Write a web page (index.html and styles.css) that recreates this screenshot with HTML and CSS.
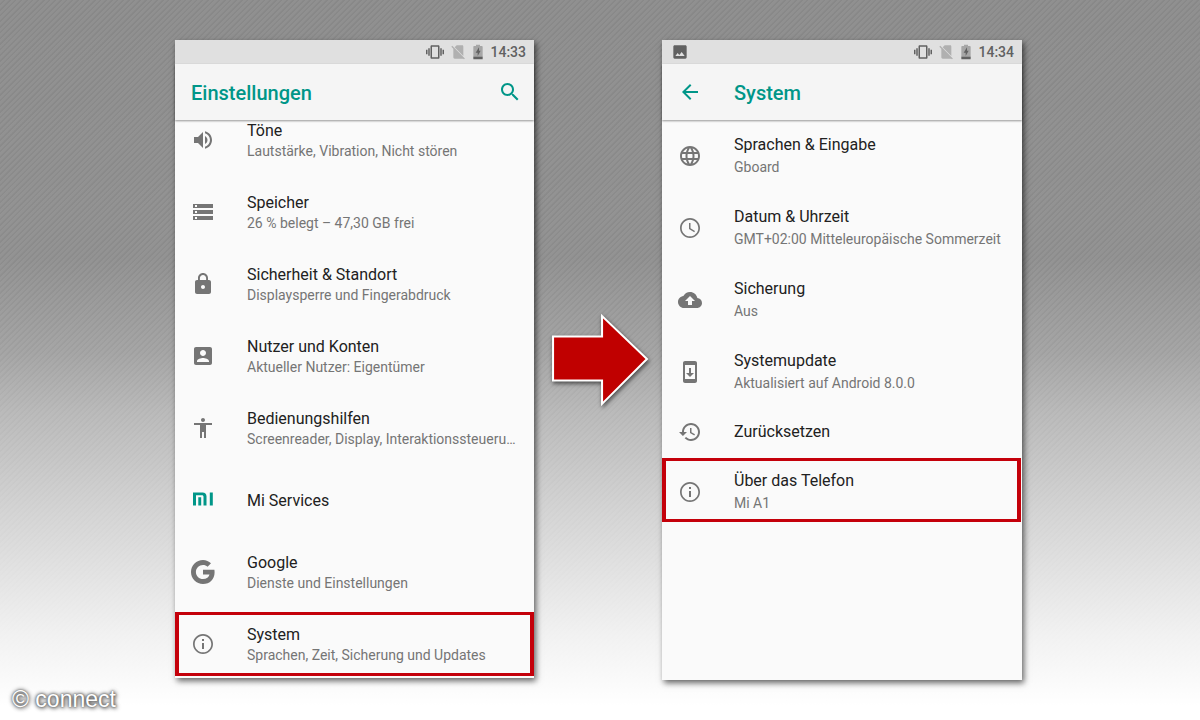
FILE: index.html
```html
<!DOCTYPE html>
<html lang="de">
<head>
  <meta charset="UTF-8">
  <meta name="viewport" content="width=device-width, initial-scale=1">
  <title>Einstellungen - System</title>
  <link rel="stylesheet" href="styles.css">
</head>
<body>
  <main class="stage">
    <section class="phone">
      <div class="statusbar">
        <div class="status-right">
          <svg class="status-icon vibrate" viewBox="0 0 24 24"><path d="M0 15h2V9H0v6zm3 2h2V7H3v10zm19-8v6h2V9h-2zm-3 8h2V7h-2v10zM16.500 3h-9C6.700 3 6 3.700 6 4.500v15c0 .8.700 1.500 1.500 1.500h9c.8 0 1.500-.7 1.500-1.500v-15c0-.8-.7-1.500-1.500-1.500zM16 19H8V5h8v14z"/></svg>
          <svg class="status-icon nosim" viewBox="0 0 24 24"><path d="M20 4c0-1.100-.5-2-1.500-2H10L7 5l13 13V4zM3.400 2.600 2 4l3 3v13c0 1.100.9 2 2 2h13l1 1 1.300-1.300z"/></svg>
          <svg class="status-icon battery" viewBox="0 0 24 24"><path class="faint" d="M17.500 3H15V1H9v2H6.500C5.700 3 5 3.700 5 4.500V20h14V4.500C19 3.700 18.300 3 17.500 3z"/><path d="M13.500 5l-5 8h3v5l4.500-8h-2.500zM5 19h14v4H5z"/></svg>
          <span>14:33</span>
        </div>
      </div>
      <header class="appbar">
        <h1>Einstellungen</h1>
        <button class="icon-btn" type="button" aria-label="Suchen">
          <svg class="icon" viewBox="0 0 24 24"><path d="M15.500 14h-.79l-.28-.27C15.410 12.590 16 11.110 16 9.500 16 5.910 13.090 3 9.500 3S3 5.910 3 9.500 5.910 16 9.500 16c1.610 0 3.090-.59 4.230-1.570l.27.28v.79l5 4.990L20.490 19l-4.990-5zm-6 0C7.010 14 5 11.990 5 9.500S7.010 5 9.500 5 14 7.010 14 9.500 11.990 14 9.500 14z"/></svg>
        </button>
      </header>
      <div class="scroll">
        <ul class="list scrolled">
          <li><a class="row" href="#">
            <svg class="icon" viewBox="0 0 24 24"><path d="M3 9v6h4l5 5V4L7 9H3zm13.500 3c0-1.770-1.020-3.290-2.500-4.030v8.050c1.480-.73 2.500-2.250 2.500-4.020zM14 3.230v2.060c2.890.86 5 3.540 5 6.710s-2.110 5.850-5 6.710v2.060c4.010-.91 7-4.490 7-8.770s-2.990-7.860-7-8.770z"/></svg>
            <div class="text"><span class="title">Töne</span><span class="sub">Lautstärke, Vibration, Nicht stören</span></div>
          </a></li>
          <li><a class="row" href="#">
            <svg class="icon" viewBox="0 0 24 24"><path d="M2 20h20v-4H2v4zm2-3h2v2H4v-2zM2 4v4h20V4H2zm4 3H4V5h2v2zm-4 7h20v-4H2v4zm2-3h2v2H4v-2z"/></svg>
            <div class="text"><span class="title">Speicher</span><span class="sub">26 % belegt – 47,30 GB frei</span></div>
          </a></li>
          <li><a class="row" href="#">
            <svg class="icon" viewBox="0 0 24 24"><path d="M18 8h-1V6c0-2.760-2.240-5-5-5S7 3.240 7 6v2H6c-1.100 0-2 .9-2 2v10c0 1.100.9 2 2 2h12c1.100 0 2-.9 2-2V10c0-1.100-.9-2-2-2zm-6 9c-1.100 0-2-.9-2-2s.9-2 2-2 2 .9 2 2-.9 2-2 2zm3.100-9H8.900V6c0-1.710 1.390-3.100 3.100-3.100s3.100 1.390 3.100 3.100v2z"/></svg>
            <div class="text"><span class="title">Sicherheit &amp; Standort</span><span class="sub">Displaysperre und Fingerabdruck</span></div>
          </a></li>
          <li><a class="row" href="#">
            <svg class="icon" viewBox="0 0 24 24"><path d="M3 5v14c0 1.100.89 2 2 2h14c1.100 0 2-.9 2-2V5c0-1.100-.9-2-2-2H5c-1.110 0-2 .9-2 2zm12 4c0 1.660-1.340 3-3 3s-3-1.340-3-3 1.340-3 3-3 3 1.340 3 3zm-9 8c0-2 4-3.100 6-3.100s6 1.100 6 3.100v1H6v-1z"/></svg>
            <div class="text"><span class="title">Nutzer und Konten</span><span class="sub">Aktueller Nutzer: Eigentümer</span></div>
          </a></li>
          <li><a class="row" href="#">
            <svg class="icon" viewBox="0 0 24 24"><path d="M12 2c1.100 0 2 .9 2 2s-.9 2-2 2-2-.9-2-2 .9-2 2-2zm9 7h-6v13h-2v-6h-2v6H9V9H3V7h18v2z"/></svg>
            <div class="text"><span class="title">Bedienungshilfen</span><span class="sub">Screenreader, Display, Interaktionssteueru…</span></div>
          </a></li>
          <li><a class="row" href="#">
            <svg class="icon teal" viewBox="0 0 24 24"><path d="M2 4.500h9.500c2.500 0 4 1.300 4 3.800v9.200h-3V8.800c0-1-.5-1.600-1.500-1.600H5v10.300H2zM7.300 9.300h2.900v8.200H7.300zM18.800 4.500h3v13h-3z"/></svg>
            <div class="text"><span class="title">Mi Services</span></div>
          </a></li>
          <li><a class="row" href="#">
            <svg class="icon" viewBox="0 0 24 24"><path d="M12 9.800v4.600h6.500c-.5 2.700-2.900 4.700-6.500 4.700-3.900 0-7.100-3.200-7.100-7.100S8.100 4.900 12 4.900c1.800 0 3.300.6 4.600 1.800l3.400-3.400C17.900 1.300 15.200 0 12 0 5.400 0 0 5.400 0 12s5.400 12 12 12c6.900 0 11.600-4.900 11.600-11.800 0-.8-.1-1.600-.2-2.400H12z"/></svg>
            <div class="text"><span class="title">Google</span><span class="sub">Dienste und Einstellungen</span></div>
          </a></li>
          <li><a class="row marked" href="#">
            <svg class="icon" viewBox="0 0 24 24"><path d="M11 17h2v-6h-2v6zm1-15C6.480 2 2 6.480 2 12s4.480 10 10 10 10-4.480 10-10S17.520 2 12 2zm0 18.300c-4.580 0-8.300-3.720-8.300-8.300S7.420 3.700 12 3.700s8.300 3.720 8.300 8.300-3.720 8.300-8.300 8.300zM11 9h2V7h-2v2z"/></svg>
            <div class="text"><span class="title">System</span><span class="sub">Sprachen, Zeit, Sicherung und Updates</span></div>
          </a></li>
        </ul>
      </div>
    </section>

    <svg class="arrow" viewBox="0 0 96 94"><path d="M2 24H50V4L94 46 50 90V67H2z"/></svg>

    <section class="phone detail">
      <div class="statusbar">
        <svg class="status-icon" viewBox="0 0 24 24"><path d="M22 20V4c0-1.100-.9-2-2-2H4c-1.100 0-2 .9-2 2v16c0 1.100.9 2 2 2h16c1.100 0 2-.9 2-2zM8.500 13.500l2.500 3.010L14.500 12l4.500 6H5l3.500-4.500z"/></svg>
        <div class="status-right">
          <svg class="status-icon vibrate" viewBox="0 0 24 24"><path d="M0 15h2V9H0v6zm3 2h2V7H3v10zm19-8v6h2V9h-2zm-3 8h2V7h-2v10zM16.500 3h-9C6.700 3 6 3.700 6 4.500v15c0 .8.700 1.500 1.500 1.500h9c.8 0 1.500-.7 1.500-1.500v-15c0-.8-.7-1.500-1.500-1.500zM16 19H8V5h8v14z"/></svg>
          <svg class="status-icon nosim" viewBox="0 0 24 24"><path d="M20 4c0-1.100-.5-2-1.500-2H10L7 5l13 13V4zM3.400 2.600 2 4l3 3v13c0 1.100.9 2 2 2h13l1 1 1.300-1.300z"/></svg>
          <svg class="status-icon battery" viewBox="0 0 24 24"><path class="faint" d="M17.500 3H15V1H9v2H6.500C5.700 3 5 3.700 5 4.500V20h14V4.500C19 3.700 18.300 3 17.500 3z"/><path d="M13.500 5l-5 8h3v5l4.500-8h-2.500zM5 19h14v4H5z"/></svg>
          <span>14:34</span>
        </div>
      </div>
      <header class="appbar">
        <button class="icon-btn" type="button" aria-label="Zurück">
          <svg class="icon" viewBox="0 0 24 24"><path d="M20 11H7.830l5.590-5.590L12 4l-8 8 8 8 1.410-1.410L7.830 13H20v-2z"/></svg>
        </button>
        <h1>System</h1>
      </header>
      <div class="scroll">
        <ul class="list">
          <li><a class="row" href="#">
            <svg class="icon" viewBox="0 0 24 24"><path d="M11.990 2C6.470 2 2 6.480 2 12s4.470 10 9.990 10C17.520 22 22 17.520 22 12S17.520 2 11.990 2zm6.930 6h-2.950c-.32-1.250-.78-2.450-1.380-3.560 1.840.63 3.370 1.910 4.330 3.560zM12 4.040c.83 1.200 1.480 2.530 1.910 3.960h-3.820c.43-1.430 1.080-2.760 1.910-3.960zM4.260 14C4.100 13.360 4 12.690 4 12s.1-1.360.26-2h3.380c-.08.66-.14 1.320-.14 2s.06 1.340.14 2H4.260zm.82 2h2.950c.32 1.250.78 2.450 1.380 3.560-1.840-.63-3.370-1.900-4.330-3.560zm2.950-8H5.080c.96-1.660 2.490-2.930 4.330-3.560C8.810 5.550 8.350 6.750 8.030 8zM12 19.960c-.83-1.200-1.480-2.530-1.910-3.960h3.820c-.43 1.430-1.080 2.760-1.910 3.960zM14.340 14H9.660c-.09-.66-.16-1.320-.16-2s.07-1.350.16-2h4.680c.09.65.16 1.320.16 2s-.07 1.340-.16 2zm.25 5.560c.6-1.110 1.060-2.310 1.380-3.560h2.950c-.96 1.650-2.490 2.930-4.330 3.560zM16.360 14c.08-.66.14-1.320.14-2s-.06-1.340-.14-2h3.380c.16.64.26 1.310.26 2s-.1 1.360-.26 2h-3.380z"/></svg>
            <div class="text"><span class="title">Sprachen &amp; Eingabe</span><span class="sub">Gboard</span></div>
          </a></li>
          <li><a class="row" href="#">
            <svg class="icon" viewBox="0 0 24 24"><path d="M12 2C6.480 2 2 6.480 2 12s4.480 10 10 10 10-4.480 10-10S17.520 2 12 2zm0 18.300c-4.580 0-8.300-3.720-8.300-8.300S7.420 3.700 12 3.700s8.300 3.720 8.300 8.300-3.720 8.300-8.300 8.300zM12.500 7H11v6l5.250 3.150.75-1.230-4.500-2.670z"/></svg>
            <div class="text"><span class="title">Datum &amp; Uhrzeit</span><span class="sub">GMT+02:00 Mitteleuropäische Sommerzeit</span></div>
          </a></li>
          <li><a class="row" href="#">
            <svg class="icon" viewBox="0 0 24 24"><path d="M19.350 10.040C18.670 6.590 15.640 4 12 4 9.110 4 6.600 5.640 5.350 8.040 2.340 8.360 0 10.910 0 14c0 3.310 2.690 6 6 6h13c2.760 0 5-2.240 5-5 0-2.640-2.050-4.780-4.650-4.960zM14 13v4h-4v-4H7l5-5 5 5h-3z"/></svg>
            <div class="text"><span class="title">Sicherung</span><span class="sub">Aus</span></div>
          </a></li>
          <li><a class="row" href="#">
            <svg class="icon" viewBox="0 0 24 24"><path d="M17 1H7c-1.100 0-2 .9-2 2v18c0 1.100.9 2 2 2h10c1.100 0 2-.9 2-2V3c0-1.100-.9-2-2-2zm0 18H7V5h10v14zm-1-6h-3V8h-2v5H8l4 4 4-4z"/></svg>
            <div class="text"><span class="title">Systemupdate</span><span class="sub">Aktualisiert auf Android 8.0.0</span></div>
          </a></li>
          <li><a class="row single" href="#">
            <svg class="icon" viewBox="0 0 24 24"><path d="M13 3c-4.970 0-9 4.030-9 9H1l3.890 3.890.07.14L9 12H6c0-3.870 3.130-7 7-7s7 3.130 7 7-3.130 7-7 7c-1.930 0-3.680-.79-4.940-2.060l-1.420 1.420C8.270 19.990 10.510 21 13 21c4.970 0 9-4.030 9-9s-4.030-9-9-9zm-1 5v5l4.280 2.540.72-1.210-3.500-2.080V8H12z"/></svg>
            <div class="text"><span class="title">Zurücksetzen</span></div>
          </a></li>
          <li><a class="row marked" href="#">
            <svg class="icon" viewBox="0 0 24 24"><path d="M11 17h2v-6h-2v6zm1-15C6.480 2 2 6.480 2 12s4.480 10 10 10 10-4.480 10-10S17.520 2 12 2zm0 18.300c-4.580 0-8.300-3.720-8.300-8.300S7.420 3.700 12 3.700s8.300 3.720 8.300 8.300-3.720 8.300-8.300 8.300zM11 9h2V7h-2v2z"/></svg>
            <div class="text"><span class="title">Über das Telefon</span><span class="sub">Mi A1</span></div>
          </a></li>
        </ul>
      </div>
    </section>
  </main>
  <div class="credit">© connect</div>
</body>
</html>
```
FILE: styles.css
```css
* {
  box-sizing: border-box;
}

body {
  margin: 0;
  min-height: 100vh;
  font-family: Roboto, "Liberation Sans", sans-serif;
  color: #212121;
  background:
    linear-gradient(rgba(255, 255, 255, 0) 0%, rgba(255, 255, 255, 0.03) 36%, rgba(255, 255, 255, 0.2) 49%, rgba(255, 255, 255, 0.38) 57%, rgba(255, 255, 255, 0.6) 70%, rgba(255, 255, 255, 0.88) 88%, #fff 98%),
    repeating-linear-gradient(135deg, #909090 0, #909090 2px, #888 3px, #888 4px);
}

.stage {
  display: grid;
  grid-template-columns: minmax(0, 359px) 128px minmax(0, 360px);
  justify-content: center;
  align-items: start;
  padding: 40px 3px 40px 0;
}

.phone {
  background: #fafafa;
  box-shadow: 2px 3px 6px rgba(0, 0, 0, 0.6);
}

.detail {
  min-height: 640px;
}

/* status bar */
.statusbar {
  display: flex;
  align-items: center;
  height: 24px;
  padding: 0 8px 0 10px;
  background: #e0e0e0;
  color: #616161;
  font-size: 14px;
  line-height: 16px;
  font-weight: 500;
}

.status-right {
  display: flex;
  align-items: center;
  margin-left: auto;
}

.status-icon {
  width: 16px;
  height: 16px;
  fill: currentColor;
}

.vibrate {
  width: 18px;
  height: 18px;
  margin-right: 6px;
}

.nosim {
  margin-right: 4px;
  fill: #b0b0b0;
}

.battery {
  margin-right: 4px;
}

.faint {
  fill: #a6a6a6;
}

/* title bar */
.appbar {
  position: relative;
  display: flex;
  align-items: center;
  justify-content: space-between;
  height: 56px;
  padding: 0 12px 0 16px;
  background: #f5f5f5;
  color: #009688;
  box-shadow: 0 1px 2px rgba(0, 0, 0, 0.4);
}

.appbar h1 {
  margin: 0;
  padding-top: 2px;
  font-size: 20px;
  line-height: 24px;
  font-weight: 500;
}

.detail .appbar {
  justify-content: flex-start;
  gap: 32px;
}

.icon-btn {
  display: flex;
  padding: 0;
  border: none;
  background: none;
  color: inherit;
  cursor: pointer;
}

.icon {
  flex: none;
  width: 24px;
  height: 24px;
  fill: currentColor;
}

/* list */
.scroll {
  overflow: hidden;
}

.list {
  list-style: none;
  margin: 0;
  padding: 0;
}

/* first screen is already scrolled a bit */
.scrolled {
  margin: -16px 0 -2px;
}

.row {
  position: relative;
  display: flex;
  align-items: center;
  gap: 32px;
  height: 72px;
  padding: 0 16px;
  color: #757575;
  text-decoration: none;
}

.row.single {
  height: 48px;
}

.row .teal {
  color: #009688;
}

.text {
  min-width: 0;
}

.scrolled .text {
  padding-top: 2px;
}

.title,
.sub {
  display: block;
  line-height: 20px;
  white-space: nowrap;
}

.title {
  font-size: 16px;
  color: #212121;
}

.sub {
  font-size: 14px;
}

.detail .title,
.detail .sub {
  line-height: 22px;
}

.marked::after {
  content: "";
  position: absolute;
  top: 4px;
  right: 0;
  bottom: 4px;
  left: 0;
  border: solid #c4000a;
  border-width: 3px 4px;
}

.detail .marked::after {
  top: 2px;
  right: 1px;
  bottom: 6px;
}

.arrow {
  width: 98px;
  height: 96px;
  margin: 272px 13px 0 0;
  justify-self: end;
  overflow: visible;
  fill: #c00000;
  stroke: #fff;
  stroke-width: 2;
  filter: drop-shadow(1px 2px 2px rgba(0, 0, 0, 0.6));
}

.credit {
  position: absolute;
  left: 12px;
  bottom: 8px;
  font-family: "Liberation Sans", Arial, sans-serif;
  font-size: 23px;
  line-height: 26px;
  color: #fff;
  text-shadow: 0 0 2px #555, 0 0 4px #555, 1px 1px 4px #555;
}
```
